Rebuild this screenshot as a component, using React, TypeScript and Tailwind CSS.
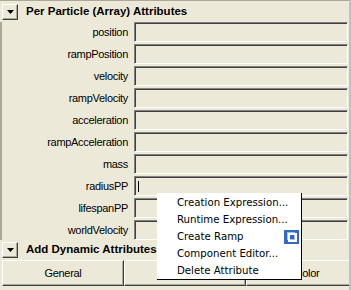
import React from 'react';

const rows = [
  'position',
  'rampPosition',
  'velocity',
  'rampVelocity',
  'acceleration',
  'rampAcceleration',
  'mass',
  'radiusPP',
  'lifespanPP',
  'worldVelocity',
];

const menuItems = [
  'Creation Expression...',
  'Runtime Expression...',
  'Create Ramp',
  'Component Editor...',
  'Delete Attribute',
];

function ExpandButton() {
  return (
    <div className="w-[16px] h-[16px] flex items-center justify-center border border-t-white border-l-white border-r-[#404040] border-b-[#404040] shadow-[inset_-1px_-1px_0_#aca899] bg-[#ece9d8]">
      <svg width="7" height="4" viewBox="0 0 7 4">
        <path d="M0 0H7L3.5 4Z" fill="#000" />
      </svg>
    </div>
  );
}

function Header({ title }: { title: string }) {
  return (
    <div className="h-[20px] flex items-center pl-[2px] gap-[8px]">
      <ExpandButton />
      <span className="font-bold text-[11.5px] text-black">{title}</span>
    </div>
  );
}

function Field({ cursor }: { cursor?: boolean }) {
  return (
    <div className="flex-1 h-[20px] border-t border-l border-t-[#808080] border-l-[#808080] border-b border-r border-b-white border-r-white shadow-[inset_1px_1px_0_#404040] flex items-center pl-[3px]">
      {cursor && <div className="w-px h-[11px] bg-black" />}
    </div>
  );
}

function OptionBoxIcon() {
  return (
    <svg width="15" height="14" viewBox="0 0 15 14">
      <rect width="15" height="14" fill="#316ac5" />
      <rect x="3.5" y="2.5" width="7" height="7" fill="none" stroke="#a9bfe8" />
      <rect x="5" y="4" width="7" height="7" fill="none" stroke="#fff" strokeWidth="2" />
    </svg>
  );
}

export default function App() {
  return (
    <div
      className="relative w-[351px] h-[290px] overflow-hidden bg-[#ece9d8] flex"
      style={{ fontFamily: '"Liberation Sans", Arial, sans-serif' }}
    >
      <div className="flex-1 flex flex-col border-t border-t-[#aca899] overflow-hidden">
        <div className="h-[21px] flex items-center pl-[2px] gap-[8px]">
          <ExpandButton />
          <span className="font-bold text-[11.5px] text-black">Per Particle (Array) Attributes</span>
        </div>
        <div className="flex flex-col gap-[2px] border-l-2 border-l-[#aca899] pr-[1px]">
          {rows.map((r) => (
            <div key={r} className="flex items-center h-[20px]">
              <div className="w-[132px] text-right text-[11px] tracking-[-0.3px] text-black pr-[6px]">{r}</div>
              <Field cursor={r === 'radiusPP'} />
            </div>
          ))}
        </div>
        <Header title="Add Dynamic Attributes" />
        <div className="flex pl-[2px]">
          {['General', '', 'Color'].map((b, i) => (
            <div
              key={i}
              className="shrink-0 w-[122px] h-[26px] flex items-center justify-center text-[11px] tracking-[-0.3px] text-black border border-t-white border-l-white border-r-[#404040] border-b-[#404040] shadow-[inset_-1px_-1px_0_#aca899]"
            >
              {b}
            </div>
          ))}
        </div>
      </div>
      <div className="w-[2px] bg-[#a8c4ef]" />

      <div
        className="absolute left-[157px] top-[193px] w-[145px] bg-white border-r border-b border-black pt-[1px]"
        style={{ fontFamily: '"DejaVu Sans", Verdana, sans-serif' }}
      >
        {menuItems.map((m) => (
          <div key={m} className="h-[17px] flex items-center justify-between pl-[20px] pr-[2px] text-[10.2px] text-black">
            <span>{m}</span>
            {m === 'Create Ramp' && <OptionBoxIcon />}
          </div>
        ))}
      </div>
    </div>
  );
}
